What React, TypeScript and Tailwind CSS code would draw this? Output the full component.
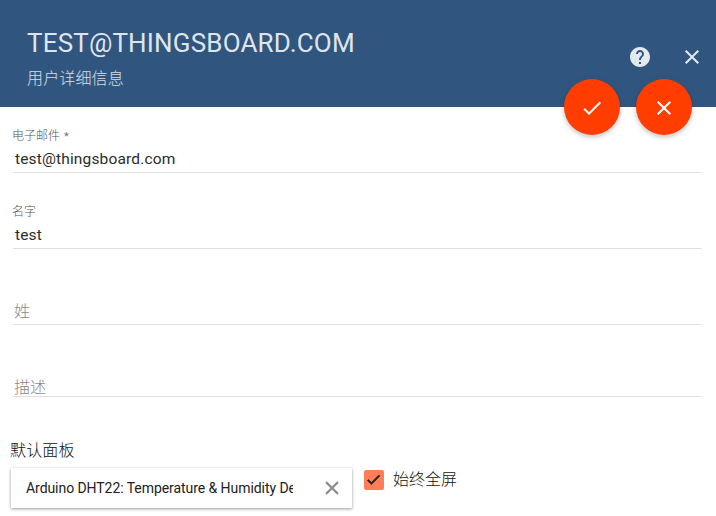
import React from "react";

const CLOSE =
  "M19 6.41L17.59 5 12 10.59 6.41 5 5 6.41 10.59 12 5 17.59 6.41 19 12 13.41 17.59 19 19 17.59 13.41 12z";
const CHECK = "M9 16.17L4.83 12l-1.42 1.41L9 19 21 7l-1.41-1.41z";
const HELP =
  "M12 2C6.48 2 2 6.48 2 12s4.48 10 10 10 10-4.48 10-10S17.52 2 12 2zm1 17h-2v-2h2v2zm2.07-7.75l-.9.92C13.45 12.9 13 13.5 13 15h-2v-.5c0-1.1.45-2.1 1.17-2.83l1.24-1.26c.37-.36.59-.86.59-1.41 0-1.1-.9-2-2-2s-2 .9-2 2H8c0-2.21 1.79-4 4-4s4 1.79 4 4c0 .88-.36 1.68-.93 2.25z";

function Icon({ d, className = "size-6" }: { d: string; className?: string }) {
  return (
    <svg viewBox="0 0 24 24" className={className} fill="currentColor" aria-hidden="true">
      <path d={d} />
    </svg>
  );
}

function ActionButton({ d, label }: { d: string; label: string }) {
  return (
    <button
      aria-label={label}
      className="flex size-14 items-center justify-center rounded-full bg-[#ff3d00] pt-0.5 text-white shadow-[0_2px_5px_rgba(0,0,0,0.26)]"
    >
      <Icon d={d} />
    </button>
  );
}

function FilledField({ label, value, required }: { label: string; value: string; required?: boolean }) {
  return (
    <div className="flex h-[76px] flex-col border-b border-[#e0e0e0] pt-[30px]">
      <label className="-ml-px h-[18px] text-[12px] leading-[18px] font-light text-[#555]">
        {label}
        {required && <span className="ml-1 text-[11px] font-normal text-[#757575]">*</span>}
      </label>
      <div className="mt-[3px] pl-0.5 text-[15.5px] leading-[22px] tracking-[0.15px] text-[#2c2c2c]">{value}</div>
    </div>
  );
}

export default function App() {
  return (
    <div className="h-[516px] w-[716px] overflow-hidden bg-white font-['Roboto','Noto_Sans_CJK_SC',sans-serif]">
      <header className="relative flex h-[107px] justify-between bg-[#305680] pl-[27px] pr-3 text-white/87">
        <div className="pt-[27px]">
          <h1 className="h-8 whitespace-nowrap text-[26px] leading-8 tracking-[0.17px]">TEST@THINGSBOARD.COM</h1>
          <p className="mt-2 text-[16px] leading-6 font-light tracking-[0.15px] text-white/80">用户详细信息</p>
        </div>
        <div className="mt-[45px] flex h-6 gap-7">
          <Icon d={HELP} />
          <Icon d={CLOSE} />
        </div>
        <div className="absolute right-6 top-[79px] flex gap-4">
          <ActionButton d={CHECK} label="应用" />
          <ActionButton d={CLOSE} label="取消" />
        </div>
      </header>

      <main>
        <div className="-mt-[10px] ml-[13px] mr-[14px]">
          <FilledField label="电子邮件" value="test@thingsboard.com" required />
          <FilledField label="名字" value="test" />
          <div className="flex h-[76px] items-end border-b border-[#e0e0e0] pl-px text-[16px] leading-6 font-light text-[#888]">
            姓
          </div>
          <div className="flex h-[72px] items-end border-b border-[#e0e0e0] pl-px text-[16px] leading-[17px] font-light text-[#888]">
            描述
          </div>
        </div>

        <div className="mt-[42px] pl-[10px] text-[16px] leading-6 font-light tracking-[0.15px] text-[#111]">默认面板</div>
        <div className="mt-[5px] flex pl-[11px]">
          <div className="flex h-10 w-[341px] items-center bg-white pl-[15px] pr-[9px] shadow-[0_1px_3px_rgba(0,0,0,0.4)]">
            <div className="w-[267px] overflow-hidden whitespace-nowrap text-[14px] tracking-[-0.06px] text-[#212121]">
              Arduino DHT22: Temperature &amp; Humidity Demo
            </div>
            <Icon d={CLOSE} className="ml-auto size-[22px] stroke-current stroke-[0.5] text-[#888]" />
          </div>
          <div className="ml-3 flex h-[24px] items-center text-[16px] leading-6 font-light text-[#111]">
            <div className="mr-[9px] flex size-5 items-center justify-center rounded-[2px] bg-[#ff7e57] pb-px pr-0.5 text-[#212121]">
              <Icon d={CHECK} className="size-[17px] stroke-current stroke-1" />
            </div>
            始终全屏
          </div>
        </div>
      </main>
    </div>
  );
}
